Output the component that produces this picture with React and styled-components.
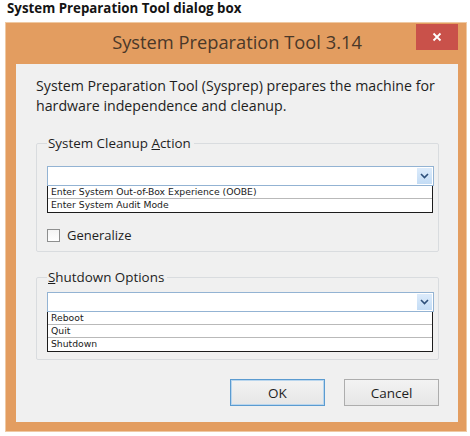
import React from 'react'
import styled, { createGlobalStyle } from 'styled-components'

const GlobalStyle = createGlobalStyle`
  body {
    margin: 0;
    background: #ffffff;
    font-family: "Open Sans", "Noto Sans", sans-serif;
  }
`

const Page = styled.div`
  width: 470px;
  height: 436px;
  box-sizing: border-box;
  display: flex;
  flex-direction: column;
  gap: 5px;
  padding-left: 5px;
`

const Caption = styled.div`
  margin-left: 2px;
  font-size: 13.3px;
  line-height: 17px;
  font-weight: 700;
  color: #141414;
`

const Window = styled.div`
  width: 462px;
  height: 410px;
  box-sizing: border-box;
  background: #e39d60;
  border: 1px solid #efc9a3;
  padding: 0 8px 9px 10px;
  display: flex;
  flex-direction: column;
`

const TitleBar = styled.div`
  height: 41px;
  display: grid;
  grid-template-columns: 1fr auto 1fr;
  align-items: start;
`

const Title = styled.div`
  grid-column: 2;
  padding-top: 7px;
  font-size: 18.3px;
  line-height: 24px;
  color: #4a3829;
`

const CloseButton = styled.div`
  grid-column: 3;
  justify-self: end;
  margin-top: 1px;
  width: 42px;
  height: 26px;
  background: #c9514a;
  display: flex;
  align-items: center;
  justify-content: center;
`

const Client = styled.div`
  flex: 1;
  background: #f0f0f0;
  padding: 12px 19px 0 20px;
  display: flex;
  flex-direction: column;
`

const Description = styled.p`
  margin: 0;
  font-size: 14.2px;
  line-height: 19.5px;
  color: #1e1e1e;
`

const Group = styled.fieldset`
  margin: ${(p) => p.$top}px 0 0 0;
  padding: 0 4px ${(p) => p.$bottom}px 10px;
  border: 1px solid #d9dcdf;
  border-radius: 2px;
  min-width: 0;
  display: flex;
  flex-direction: column;

  legend {
    margin-left: 0;
    padding: 0 3px 0 1px;
    font-size: 13.4px;
    line-height: 18px;
    color: #1e1e1e;
  }
`

const ComboWrap = styled.div`
  margin-top: ${(p) => p.$top}px;
  display: flex;
  flex-direction: column;
`

const ComboField = styled.div`
  height: 20px;
  box-sizing: border-box;
  background: #ffffff;
  border: 1px solid #93b3d3;
  display: flex;
  justify-content: flex-end;
  align-items: stretch;
  padding: 1px;
`

const ArrowButton = styled.div`
  width: 15px;
  background: linear-gradient(#dcebfb, #c3dcf5);
  display: flex;
  align-items: center;
  justify-content: center;
`

const List = styled.div`
  border: 1px solid #1c1c1c;
  border-top: none;
  background: #ffffff;
  margin-right: 1px;
`

const Item = styled.div`
  height: 13px;
  box-sizing: border-box;
  padding-left: 3px;
  font-family: "DejaVu Sans", "Open Sans", sans-serif;
  font-size: 9.25px;
  line-height: 12px;
  color: #1a1a1a;
  border-bottom: 1px solid #b9b9b9;

  &:last-child {
    border-bottom: none;
  }
`

const CheckRow = styled.label`
  margin-top: 14px;
  display: flex;
  align-items: center;
  gap: 7px;
  font-size: 13px;
  line-height: 17px;
  color: #1e1e1e;
`

const CheckBox = styled.span`
  width: 13px;
  height: 13px;
  box-sizing: border-box;
  border: 1px solid #8e8f8f;
  background: linear-gradient(#f4f4f4, #ffffff);
`

const ButtonRow = styled.div`
  margin-top: 19px;
  display: flex;
  justify-content: flex-end;
  gap: 19px;
`

const Button = styled.div`
  width: 95px;
  height: 27px;
  box-sizing: border-box;
  border: 1px solid ${(p) => (p.$default ? '#5b9bd0' : '#adadad')};
  box-shadow: ${(p) => (p.$default ? 'inset 0 0 0 1px #b9d6ee' : 'none')};
  background: linear-gradient(#f3f3f3, #e6e6e6);
  display: flex;
  align-items: center;
  justify-content: center;
  font-size: 13.5px;
  color: #1e1e1e;
`

const Chevron = () => (
  <svg width="9" height="6" viewBox="0 0 9 6">
    <path d="M1 1 L4.5 4.5 L8 1" fill="none" stroke="#2d4f7a" strokeWidth="1.6" />
  </svg>
)

const CloseIcon = () => (
  <svg width="10" height="10" viewBox="0 0 10 10">
    <path d="M1.5 1.5 L8.5 8.5 M8.5 1.5 L1.5 8.5" stroke="#ffffff" strokeWidth="1.8" />
  </svg>
)

const ComboBox = ({ items, top }) => (
  <ComboWrap $top={top}>
    <ComboField>
      <ArrowButton>
        <Chevron />
      </ArrowButton>
    </ComboField>
    <List>
      {items.map((item) => (
        <Item key={item}>{item}</Item>
      ))}
    </List>
  </ComboWrap>
)

export default function App() {
  return (
    <Page>
      <GlobalStyle />
      <Caption>System Preparation Tool dialog box</Caption>
      <Window>
        <TitleBar>
          <Title>System Preparation Tool 3.14</Title>
          <CloseButton>
            <CloseIcon />
          </CloseButton>
        </TitleBar>
        <Client>
          <Description>
            System Preparation Tool (Sysprep) prepares the machine for
            <br />
            hardware independence and cleanup.
          </Description>
          <Group $top={19} $bottom={7}>
            <legend>
              System Cleanup <u>A</u>ction
            </legend>
            <ComboBox
              top={14}
              items={['Enter System Out-of-Box Experience (OOBE)', 'Enter System Audit Mode']}
            />
            <CheckRow>
              <CheckBox />
              Generalize
            </CheckRow>
          </Group>
          <Group $top={16} $bottom={7}>
            <legend>
              <u>S</u>hutdown Options
            </legend>
            <ComboBox top={6} items={['Reboot', 'Quit', 'Shutdown']} />
          </Group>
          <ButtonRow>
            <Button $default>OK</Button>
            <Button>Cancel</Button>
          </ButtonRow>
        </Client>
      </Window>
    </Page>
  )
}
